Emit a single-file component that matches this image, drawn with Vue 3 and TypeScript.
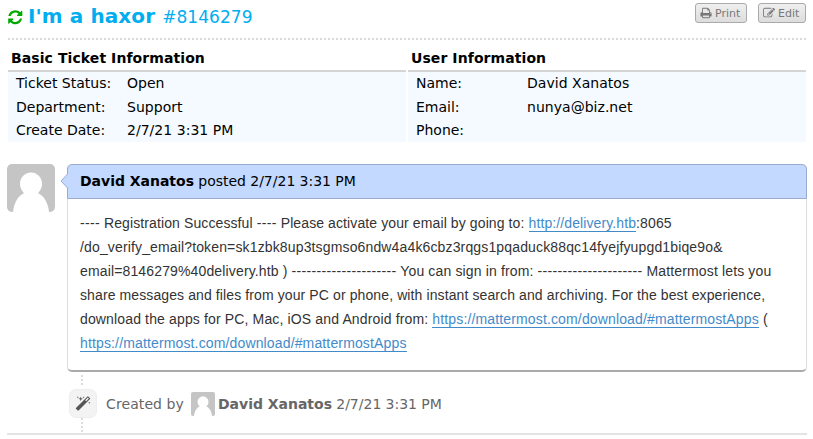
<script setup lang="ts">
interface Field { label: string; value: string }
interface Panel { title: string; fields: Field[] }

const panels: Panel[] = [
  {
    title: 'Basic Ticket Information',
    fields: [
      { label: 'Ticket Status:', value: 'Open' },
      { label: 'Department:', value: 'Support' },
      { label: 'Create Date:', value: '2/7/21 3:31 PM' },
    ],
  },
  {
    title: 'User Information',
    fields: [
      { label: 'Name:', value: 'David Xanatos' },
      { label: 'Email:', value: 'nunya@biz.net' },
      { label: 'Phone:', value: '' },
    ],
  },
]

const download = 'https://mattermost.com/download/#mattermostApps'
</script>

<template>
  <main class="ticket">
    <header class="top">
      <h1>
        <svg class="refresh" viewBox="0 0 1792 1792"><path d="M1639 1056q0 5-1 7-64 268-268 434.500t-478 166.500q-146 0-282.500-55t-243.500-157l-129 129q-19 19-45 19t-45-19-19-45v-448q0-26 19-45t45-19h448q26 0 45 19t19 45-19 45l-137 137q71 66 161 102t187 36q134 0 250-65t186-179q11-17 53-117 8-23 30-23h192q13 0 22.500 9.500t9.500 22.500zm25-800v448q0 26-19 45t-45 19h-448q-26 0-45-19t-19-45 19-45l138-138q-148-137-349-137-134 0-250 65t-186 179q-11 17-53 117-8 23-30 23h-199q-13 0-22.500-9.500t-9.500-22.500v-7q65-268 270-434.500t480-166.500q146 0 284 55.500t245 156.500l130-129q19-19 45-19t45 19 19 45z" /></svg>
        <b>I'm a haxor</b>
        <small>#8146279</small>
      </h1>
      <div class="actions">
        <button class="print">
          <svg viewBox="0 0 1792 1792"><path d="M448 1536h896v-256h-896v256zm0-640h896v-384h-160q-40 0-68-28t-28-68v-160h-640v640zm1152 64q0-26-19-45t-45-19-45 19-19 45 19 45 45 19 45-19 19-45zm128 0v416q0 13-9.500 22.500t-22.500 9.500h-224v160q0 40-28 68t-68 28h-960q-40 0-68-28t-28-68v-160h-224q-13 0-22.500-9.500t-9.500-22.500v-416q0-79 56.500-135.500t135.500-56.500h64v-544q0-40 28-68t68-28h672q40 0 88 20t76 48l152 152q28 28 48 76t20 88v256h64q79 0 135.500 56.500t56.500 135.500z" /></svg>
          <span>Print</span>
        </button>
        <button class="edit">
          <svg viewBox="0 0 1792 1792"><path d="M888 1184l116-116-152-152-116 116v56h96v96h56zm440-720q-16-16-33 1l-350 350q-17 17-1 33t33-1l350-350q17-17 1-33zm80 594v190q0 119-84.500 203.500t-203.500 84.500h-832q-119 0-203.500-84.500t-84.500-203.500v-832q0-119 84.500-203.500t203.500-84.500h832q63 0 117 25 15 7 18 23 3 17-9 29l-49 49q-14 14-32 8-23-6-45-6h-832q-66 0-113 47t-47 113v832q0 66 47 113t113 47h832q66 0 113-47t47-113v-126q0-13 9-22l64-64q15-15 35-7t20 29zm-96-738l288 288-672 672h-288v-288zm444 132l-92 92-288-288 92-92q28-28 68-28t68 28l152 152q28 28 28 68t-28 68z" /></svg>
          <span>Edit</span>
        </button>
      </div>
    </header>
    <svg class="rule" width="798" height="2"><line x1="0" y1="1" x2="798" y2="1" stroke="#d9d9d9" stroke-width="2" stroke-dasharray="2 2" /></svg>

    <section class="panels">
      <div v-for="panel in panels" :key="panel.title" class="panel">
        <h2>{{ panel.title }}</h2>
        <dl>
          <div v-for="field in panel.fields" :key="field.label" class="field">
            <dt>{{ field.label }}</dt>
            <dd>{{ field.value }}</dd>
          </div>
        </dl>
      </div>
    </section>

    <section class="entry">
      <svg class="avatar" viewBox="0 0 48 48"><rect width="48" height="48" fill="#c5c5c5" /><ellipse cx="24" cy="20" rx="11" ry="11.500" fill="#fff" /><path d="M6 48C7 37 13 29 20 28.500h8C35 29 41 37 42 48z" fill="#fff" /></svg>
      <article class="message">
        <div class="message-head">
          <svg class="arrow" viewBox="0 0 8 16"><path d="M8 0.500L1 8L8 15.500" fill="#c3d9ff" stroke="#99abd0" /></svg>
          <b>David Xanatos</b> posted 2/7/21 3:31 PM
        </div>
        <div class="message-body">
          <div class="snug"><i>----</i> Registration Successful <i>----</i> Please activate your email by going to: <a>http://delivery.htb</a>:8065</div>
          <div>/do_verify_email?token=sk1zbk8up3tsgmso6ndw4a4k6cbz3rqgs1pqaduck88qc14fyejfyupgd1biqe9o&amp;</div>
          <div>email=8146279%40delivery.htb ) <i>---------------------</i> You can sign in from: <i>---------------------</i> Mattermost lets you</div>
          <div class="snug">share messages and files from your PC or phone, with instant search and archiving. For the best experience,</div>
          <div>download the apps for PC, Mac, iOS and Android from: <a>{{ download }}</a> (</div>
          <div><a>{{ download }}</a></div>
        </div>
      </article>
    </section>

    <section class="event">
      <div class="track">
        <svg class="dots before" width="2" height="11"><path d="M1 0V11" stroke="#dcdcdc" stroke-width="2" stroke-dasharray="2 2" /></svg>
        <span class="badge">
          <svg viewBox="0 0 1792 1792"><path d="M1254 581l293-293-107-107-293 293zm447-293q0 27-18 45l-1286 1286q-18 18-45 18t-45-18l-198-198q-18-18-18-45t18-45l1286-1286q18-18 45-18t45 18l198 198q18 18 18 45zm-1351-190l98 30-98 30-30 98-30-98-98-30 98-30 30-98zm350 162l196 60-196 60-60 196-60-196-196-60 196-60 60-196zm930 478l98 30-98 30-30 98-30-98-98-30 98-30 30-98zm-640-640l98 30-98 30-30 98-30-98-98-30 98-30 30-98z" /></svg>
        </span>
        <svg class="dots" width="2" height="14"><path d="M1 0V14" stroke="#dcdcdc" stroke-width="2" stroke-dasharray="2 2" /></svg>
      </div>
      <div class="event-text">
        <span class="created">Created by</span>
        <svg class="mini" viewBox="0 0 48 48"><rect width="48" height="48" fill="#c5c5c5" /><ellipse cx="24" cy="20" rx="11" ry="11.500" fill="#fff" /><path d="M6 48C7 37 13 29 20 28.500h8C35 29 41 37 42 48z" fill="#fff" /></svg>
        <span><b>David Xanatos</b> 2/7/21 3:31 PM</span>
      </div>
    </section>
    <hr>
  </main>
</template>

<style>
body { background: #fff; overflow: hidden; }
</style>

<style scoped>
* { box-sizing: border-box; }
.ticket { width: 813px; height: 439px; overflow: hidden; font: 14px/20px "DejaVu Sans", sans-serif; color: #000; white-space: nowrap; }
.top { display: flex; justify-content: space-between; height: 38px; padding: 3px 7px 0 8px; }
h1 { display: flex; align-items: baseline; margin: 0; font-size: 20px; line-height: 26px; font-weight: 400; color: #00aeef; }
h1 b { letter-spacing: 0.100px; }
h1 small { margin-left: 7px; font-size: 17px; letter-spacing: 0.050px; }
.refresh { width: 16.500px; height: 16.500px; margin: 0 4.500px 0 -1px; fill: #0a0; align-self: flex-start; position: relative; top: 6px; }
.actions { display: flex; gap: 11px; }
button { display: flex; align-items: center; gap: 3px; height: 20px; padding: 0 4px; border: 1px solid #aaa; border-radius: 3px; background: linear-gradient(#efefef, #ddd); color: #777; font: 11px/16px "DejaVu Sans", sans-serif; }
button span { padding-top: 1px; }
button svg { flex: none; width: 12px; height: 12px; fill: #777; }
.print { width: 52px; }
.edit { width: 48px; }
.rule { display: block; margin-left: 8px; }
.panels { display: grid; grid-template-columns: 398px 398px; gap: 2px; margin: 7px 0 0 8px; }
h2 { height: 25px; margin: 0; padding-left: 3px; border-bottom: 2px solid #d5d5d5; font-size: 14px; line-height: 22px; letter-spacing: 0.080px; }
dl { height: 70px; margin: 0; padding-left: 8px; background: #f4faff; }
.field { display: flex; height: 23.500px; line-height: 23px; }
dt { width: 111px; }
dd { margin: 0; letter-spacing: 0.030px; }
.entry { display: flex; gap: 12px; margin: 22px 0 0 7px; }
.avatar { width: 48px; height: 48px; border-radius: 5px; }
.message { width: 740px; height: 208px; border: 1px solid #ddd; border-top: 0; border-bottom: 2px solid #aaa; border-radius: 5px; }
.message-head { position: relative; height: 35px; margin: 0 -1px; padding-left: 12px; border: 1px solid #99abd0; border-radius: 5px 5px 0 0; background: #c3d9ff; line-height: 33px; word-spacing: -0.200px; }
.arrow { position: absolute; left: -8px; top: 8px; width: 8px; height: 16px; }
.message-body { padding: 12px; font: 14px/24px "Liberation Sans", sans-serif; letter-spacing: 0.143px; color: #333; }
.message-body .snug { letter-spacing: 0.106px; }
.message-body i { font-style: normal; letter-spacing: 0.333px; }
a { color: #428bca; border-bottom: 1px solid #428bca; }
.event { display: flex; height: 61px; margin-left: 69px; color: #666; }
.track { width: 28px; padding-top: 3px; }
.dots { display: block; margin-left: 12px; }
.before { margin-bottom: 3px; }
.badge { display: flex; align-items: center; justify-content: center; width: 28px; height: 29px; border: 1px solid #eee; border-radius: 7px; background: #f3f3f3; }
.badge svg { width: 16px; height: 16px; fill: #555; }
.event-text { display: flex; align-items: center; height: 28px; margin: 18px 0 0 9px; word-spacing: -0.200px; }
.created { width: 78px; letter-spacing: 0.100px; }
.mini { width: 24px; height: 24px; margin: 0 3px 0 7px; border-radius: 2px; }
hr { width: 800px; height: 2px; margin: 0 0 0 7px; border: 0; background: #e3e3e3; }
</style>
